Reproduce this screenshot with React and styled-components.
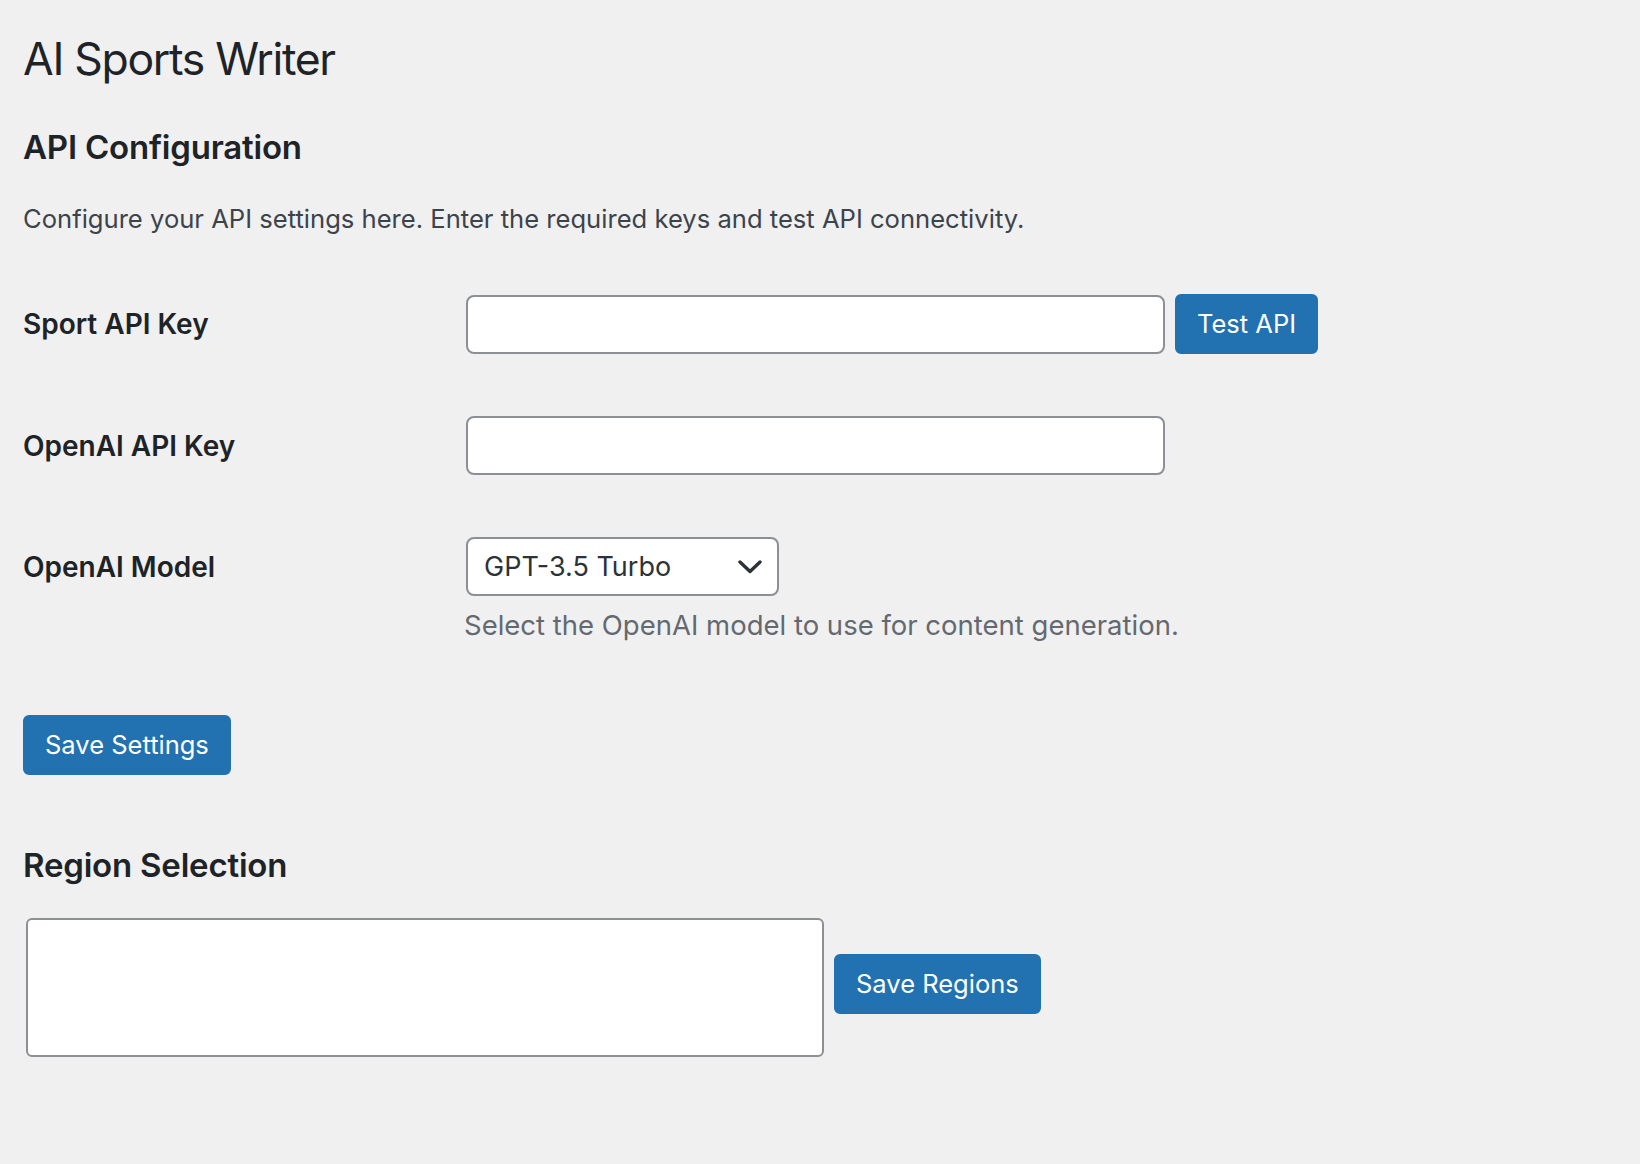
import styled, { createGlobalStyle } from 'styled-components';

const GlobalStyle = createGlobalStyle`
	html, body {
		margin: 0;
		background: #f0f0f1;
	}
	body {
		font-family: Inter, 'Noto Sans', 'Liberation Sans', sans-serif;
		color: #3c434a;
	}
	* {
		box-sizing: border-box;
	}
`;

function App() {
	return (
		<>
			<GlobalStyle />
			<Wrap>
				<Title>AI Sports Writer</Title>
				<SectionTitle>API Configuration</SectionTitle>
				<Intro>
					Configure your API settings here. Enter the required keys and test API
					connectivity.
				</Intro>
				<FormTable>
					<FieldLabel>Sport API Key</FieldLabel>
					<FieldCell>
						<TextInput type="text" />
						<Button type="button">Test API</Button>
					</FieldCell>

					<FieldLabel>OpenAI API Key</FieldLabel>
					<FieldCell>
						<TextInput type="text" />
					</FieldCell>

					<FieldLabel>OpenAI Model</FieldLabel>
					<FieldCell>
						<SelectBox>
							<span>GPT-3.5 Turbo</span>
							<svg width="24" height="14" viewBox="0 0 24 14" fill="none">
								<path
									d="M2 2 L12 11.5 L22 2"
									stroke="#2c3338"
									strokeWidth="3.4"
									strokeLinecap="round"
									strokeLinejoin="round"
								/>
							</svg>
						</SelectBox>
						<Description>
							Select the OpenAI model to use for content generation.
						</Description>
					</FieldCell>
				</FormTable>
				<SubmitRow>
					<Button type="button">Save Settings</Button>
				</SubmitRow>
				<SectionTitle $top="68px">Region Selection</SectionTitle>
				<RegionRow>
					<RegionArea />
					<Button type="button" $lift="8px">
						Save Regions
					</Button>
				</RegionRow>
			</Wrap>
		</>
	);
}

export default App;

const Wrap = styled.div`
	padding: 0 0 60px 23px;
`;

const Title = styled.h1`
	margin: 0;
	padding-top: 29px;
	font-size: 44.5px;
	line-height: 60px;
	font-weight: 400;
	color: #1d2327;
	letter-spacing: -1.3px;
`;

const SectionTitle = styled.h2`
	margin: ${(props) => props.$top || '36px'} 0 0;
	font-size: 33px;
	line-height: 44px;
	font-weight: 600;
	color: #1d2327;
	letter-spacing: -0.2px;
`;

const Intro = styled.p`
	margin: 32px 0 0;
	font-size: 25.6px;
	line-height: 36px;
	color: #3c434a;
`;

const FormTable = styled.div`
	display: grid;
	grid-template-columns: 443px 1fr;
	row-gap: 62px;
	margin-top: 57px;
`;

const FieldLabel = styled.div`
	padding-top: 12px;
	font-size: 28px;
	line-height: 36px;
	font-weight: 600;
	color: #1d2327;
`;

const FieldCell = styled.div`
	display: flex;
	flex-wrap: wrap;
	align-items: center;
	gap: 0 10px;
`;

const TextInput = styled.input`
	width: 699px;
	height: 59px;
	margin: 0;
	padding: 0 16px;
	background: #fff;
	border: 2px solid #8c8f94;
	border-radius: 8px;
	font-family: inherit;
	font-size: 28px;
	color: #2c3338;
	outline: none;
`;

const Button = styled.button`
	height: 60px;
	margin: 0 0 ${(props) => props.$lift || '0'};
	padding: 0 20px;
	background: #2271b1;
	border: 2px solid #2271b1;
	border-radius: 6px;
	color: #fff;
	font-family: inherit;
	font-size: 25.5px;
	line-height: 56px;
	cursor: pointer;
	white-space: nowrap;
`;

const SelectBox = styled.div`
	display: flex;
	align-items: center;
	justify-content: space-between;
	width: 313px;
	height: 59px;
	padding: 0 15px 0 16px;
	background: #fff;
	border: 2px solid #8c8f94;
	border-radius: 8px;
	font-size: 27px;
	color: #2c3338;
`;

const Description = styled.p`
	flex-basis: 100%;
	margin: 11px 0 0 -2px;
	font-size: 27.5px;
	line-height: 36px;
	color: #646970;
`;

const SubmitRow = styled.div`
	margin-top: 72px;
`;

const RegionRow = styled.div`
	display: flex;
	align-items: center;
	gap: 10px;
	margin-top: 31px;
`;

const RegionArea = styled.textarea`
	width: 798px;
	height: 139px;
	margin: 0 0 0 3px;
	padding: 8px 16px;
	background: #fff;
	border: 2px solid #8c8f94;
	border-radius: 6px;
	font-family: inherit;
	font-size: 28px;
	resize: none;
	outline: none;
`;
